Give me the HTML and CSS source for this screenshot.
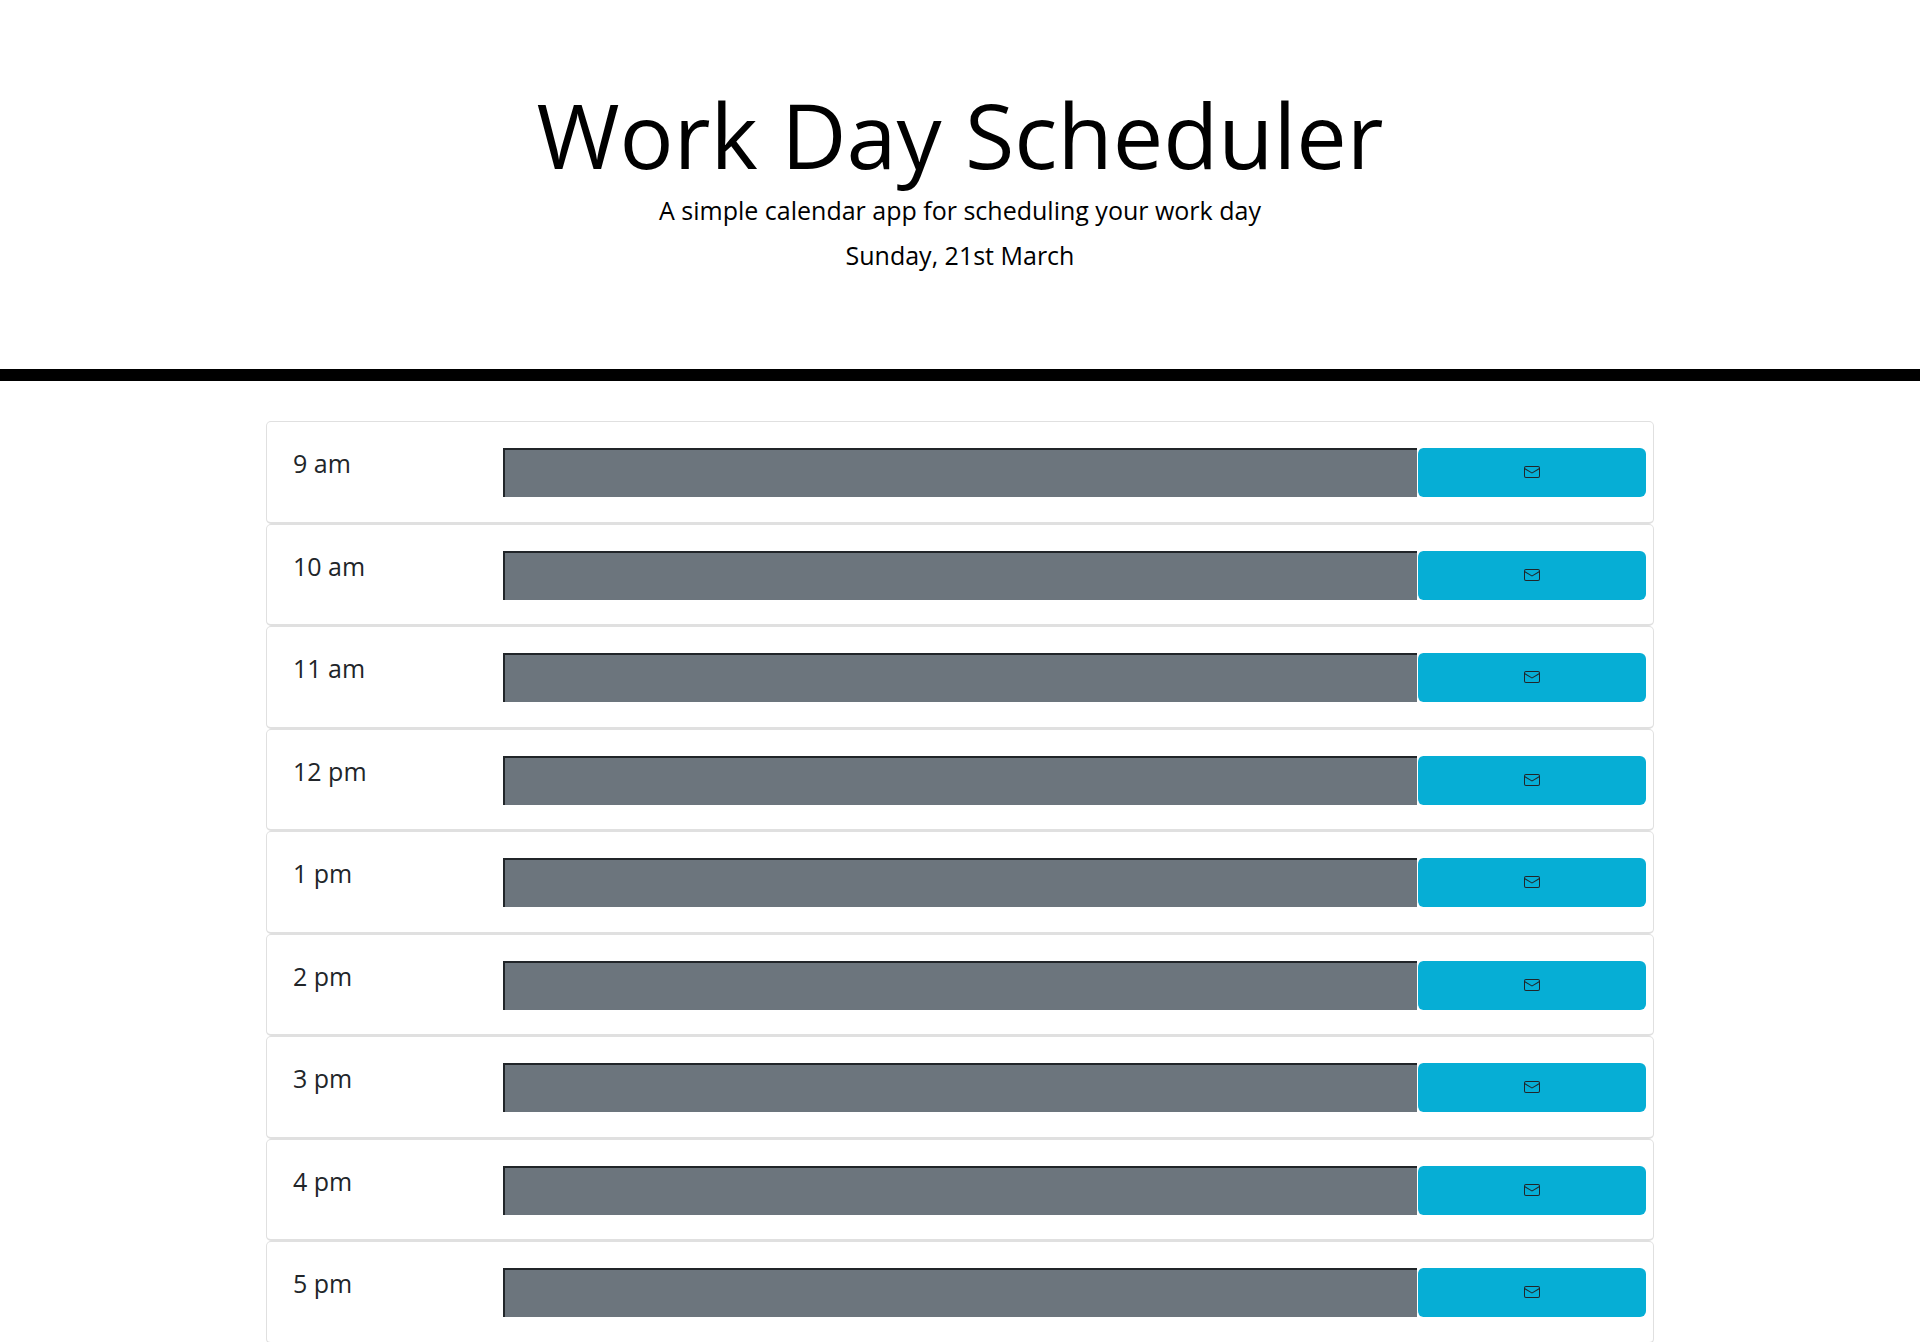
FILE: index.html
```html
<!DOCTYPE html>
<html lang="en">
<head>
    <meta charset="UTF-8">
    <meta name="viewport" content="width=device-width, initial-scale=1.0">
    <title>Work Day Scheduler</title>
    <link rel="stylesheet" href="styles.css">
</head>
<body>

    <header class="jumbotron">
        <h1>Work Day Scheduler</h1>
        <p class="lead">A simple calendar app for scheduling your work day</p>
        <p class="lead" id="currentDay">Sunday, 21st March</p>
    </header>

    <div class="container">
        <div class="time-block">
            <div class="hour">9 am</div>
            <textarea class="description"></textarea>
            <button class="save-btn" aria-label="Save"><svg class="icon" viewBox="0 0 16 16"><path d="M14 3H2a1 1 0 0 0-1 1v8a1 1 0 0 0 1 1h12a1 1 0 0 0 1-1V4a1 1 0 0 0-1-1zM2 2a2 2 0 0 0-2 2v8a2 2 0 0 0 2 2h12a2 2 0 0 0 2-2V4a2 2 0 0 0-2-2H2z"/><path d="M.071 4.243a.5.5 0 0 1 .686-.172L8 8.417l7.243-4.346a.5.5 0 0 1 .514.858L8 9.583.243 4.93a.5.5 0 0 1-.172-.686z"/></svg></button>
        </div>
        <div class="time-block">
            <div class="hour">10 am</div>
            <textarea class="description"></textarea>
            <button class="save-btn" aria-label="Save"><svg class="icon" viewBox="0 0 16 16"><path d="M14 3H2a1 1 0 0 0-1 1v8a1 1 0 0 0 1 1h12a1 1 0 0 0 1-1V4a1 1 0 0 0-1-1zM2 2a2 2 0 0 0-2 2v8a2 2 0 0 0 2 2h12a2 2 0 0 0 2-2V4a2 2 0 0 0-2-2H2z"/><path d="M.071 4.243a.5.5 0 0 1 .686-.172L8 8.417l7.243-4.346a.5.5 0 0 1 .514.858L8 9.583.243 4.93a.5.5 0 0 1-.172-.686z"/></svg></button>
        </div>
        <div class="time-block">
            <div class="hour">11 am</div>
            <textarea class="description"></textarea>
            <button class="save-btn" aria-label="Save"><svg class="icon" viewBox="0 0 16 16"><path d="M14 3H2a1 1 0 0 0-1 1v8a1 1 0 0 0 1 1h12a1 1 0 0 0 1-1V4a1 1 0 0 0-1-1zM2 2a2 2 0 0 0-2 2v8a2 2 0 0 0 2 2h12a2 2 0 0 0 2-2V4a2 2 0 0 0-2-2H2z"/><path d="M.071 4.243a.5.5 0 0 1 .686-.172L8 8.417l7.243-4.346a.5.5 0 0 1 .514.858L8 9.583.243 4.93a.5.5 0 0 1-.172-.686z"/></svg></button>
        </div>
        <div class="time-block">
            <div class="hour">12 pm</div>
            <textarea class="description"></textarea>
            <button class="save-btn" aria-label="Save"><svg class="icon" viewBox="0 0 16 16"><path d="M14 3H2a1 1 0 0 0-1 1v8a1 1 0 0 0 1 1h12a1 1 0 0 0 1-1V4a1 1 0 0 0-1-1zM2 2a2 2 0 0 0-2 2v8a2 2 0 0 0 2 2h12a2 2 0 0 0 2-2V4a2 2 0 0 0-2-2H2z"/><path d="M.071 4.243a.5.5 0 0 1 .686-.172L8 8.417l7.243-4.346a.5.5 0 0 1 .514.858L8 9.583.243 4.93a.5.5 0 0 1-.172-.686z"/></svg></button>
        </div>
        <div class="time-block">
            <div class="hour">1 pm</div>
            <textarea class="description"></textarea>
            <button class="save-btn" aria-label="Save"><svg class="icon" viewBox="0 0 16 16"><path d="M14 3H2a1 1 0 0 0-1 1v8a1 1 0 0 0 1 1h12a1 1 0 0 0 1-1V4a1 1 0 0 0-1-1zM2 2a2 2 0 0 0-2 2v8a2 2 0 0 0 2 2h12a2 2 0 0 0 2-2V4a2 2 0 0 0-2-2H2z"/><path d="M.071 4.243a.5.5 0 0 1 .686-.172L8 8.417l7.243-4.346a.5.5 0 0 1 .514.858L8 9.583.243 4.93a.5.5 0 0 1-.172-.686z"/></svg></button>
        </div>
        <div class="time-block">
            <div class="hour">2 pm</div>
            <textarea class="description"></textarea>
            <button class="save-btn" aria-label="Save"><svg class="icon" viewBox="0 0 16 16"><path d="M14 3H2a1 1 0 0 0-1 1v8a1 1 0 0 0 1 1h12a1 1 0 0 0 1-1V4a1 1 0 0 0-1-1zM2 2a2 2 0 0 0-2 2v8a2 2 0 0 0 2 2h12a2 2 0 0 0 2-2V4a2 2 0 0 0-2-2H2z"/><path d="M.071 4.243a.5.5 0 0 1 .686-.172L8 8.417l7.243-4.346a.5.5 0 0 1 .514.858L8 9.583.243 4.93a.5.5 0 0 1-.172-.686z"/></svg></button>
        </div>
        <div class="time-block">
            <div class="hour">3 pm</div>
            <textarea class="description"></textarea>
            <button class="save-btn" aria-label="Save"><svg class="icon" viewBox="0 0 16 16"><path d="M14 3H2a1 1 0 0 0-1 1v8a1 1 0 0 0 1 1h12a1 1 0 0 0 1-1V4a1 1 0 0 0-1-1zM2 2a2 2 0 0 0-2 2v8a2 2 0 0 0 2 2h12a2 2 0 0 0 2-2V4a2 2 0 0 0-2-2H2z"/><path d="M.071 4.243a.5.5 0 0 1 .686-.172L8 8.417l7.243-4.346a.5.5 0 0 1 .514.858L8 9.583.243 4.93a.5.5 0 0 1-.172-.686z"/></svg></button>
        </div>
        <div class="time-block">
            <div class="hour">4 pm</div>
            <textarea class="description"></textarea>
            <button class="save-btn" aria-label="Save"><svg class="icon" viewBox="0 0 16 16"><path d="M14 3H2a1 1 0 0 0-1 1v8a1 1 0 0 0 1 1h12a1 1 0 0 0 1-1V4a1 1 0 0 0-1-1zM2 2a2 2 0 0 0-2 2v8a2 2 0 0 0 2 2h12a2 2 0 0 0 2-2V4a2 2 0 0 0-2-2H2z"/><path d="M.071 4.243a.5.5 0 0 1 .686-.172L8 8.417l7.243-4.346a.5.5 0 0 1 .514.858L8 9.583.243 4.93a.5.5 0 0 1-.172-.686z"/></svg></button>
        </div>
        <div class="time-block">
            <div class="hour">5 pm</div>
            <textarea class="description"></textarea>
            <button class="save-btn" aria-label="Save"><svg class="icon" viewBox="0 0 16 16"><path d="M14 3H2a1 1 0 0 0-1 1v8a1 1 0 0 0 1 1h12a1 1 0 0 0 1-1V4a1 1 0 0 0-1-1zM2 2a2 2 0 0 0-2 2v8a2 2 0 0 0 2 2h12a2 2 0 0 0 2-2V4a2 2 0 0 0-2-2H2z"/><path d="M.071 4.243a.5.5 0 0 1 .686-.172L8 8.417l7.243-4.346a.5.5 0 0 1 .514.858L8 9.583.243 4.93a.5.5 0 0 1-.172-.686z"/></svg></button>
        </div>
    </div>

</body>
</html>
```

FILE: styles.css
```css
html {
    overflow: hidden;
}
body {
    margin: 0;
    font-family: "Open Sans", sans-serif;
    color: #212529;
    background-color: #fff;
}
.jumbotron {
    height: 287px;
    padding-top: 82px;
    text-align: center;
    color: #000;
    border-bottom: 12px solid #000;
}
h1 {
    margin: 0 0 2px;
    font-size: 90px;
    font-weight: 400;
    line-height: 104px;
}
.lead {
    margin: 0;
    font-size: 25px;
    font-weight: 400;
    line-height: 45px;
}
.container {
    width: 1388px;
    margin: 40px auto 0;
}
.time-block {
    display: flex;
    align-items: flex-start;
    box-sizing: border-box;
    height: 102.5px;
    padding: 26px 7px 0 26px;
    border: 1px solid #e0e0e0;
    border-bottom-width: 2px;
    border-radius: 5px;
}
.hour {
    width: 210px;
    margin-top: -3px;
    font-size: 25px;
    line-height: 36px;
}
.description {
    flex: 1;
    height: 49px;
    box-sizing: border-box;
    padding: 0;
    background-color: #6c757d;
    border: none;
    border-top: 2px solid #212529;
    border-left: 2px solid #212529;
    resize: none;
}
.save-btn {
    width: 229px;
    height: 49px;
    padding: 0;
    display: flex;
    align-items: center;
    justify-content: center;
    background-color: #06aed5;
    border: none;
    border-left: 1px solid #fff;
    border-radius: 6px;
}
.icon {
    width: 16px;
    height: 16px;
    margin-bottom: 1px;
    fill: #212529;
    fill-rule: evenodd;
}
```
